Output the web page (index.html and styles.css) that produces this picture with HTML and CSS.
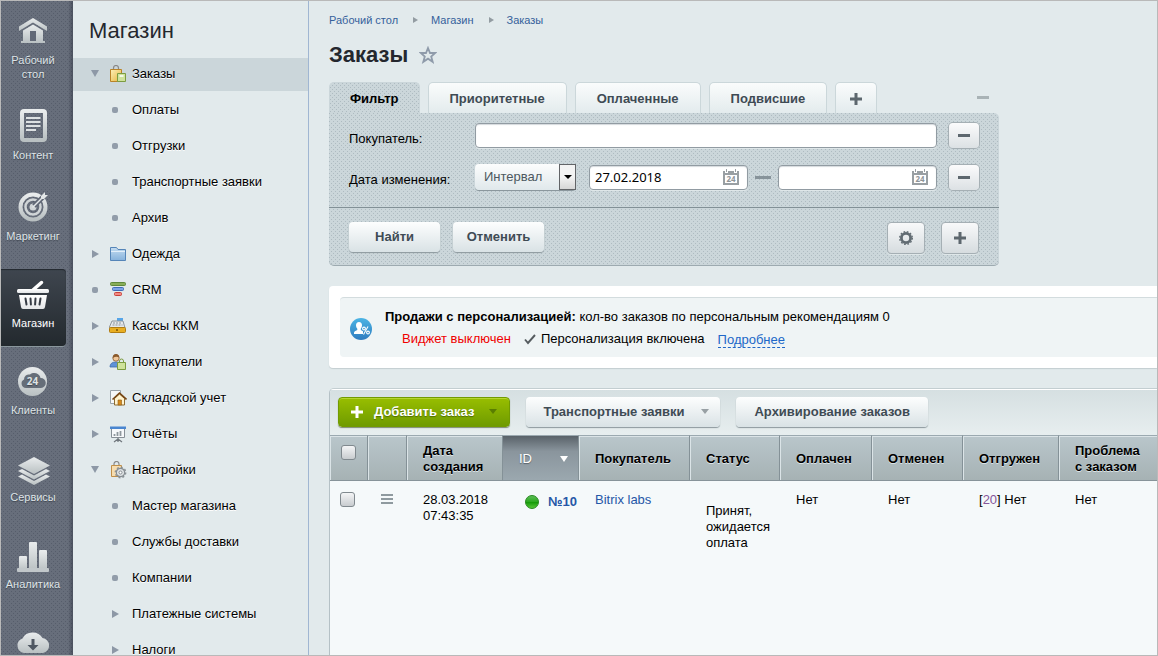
FILE: index.html
```html
<!DOCTYPE html>
<html lang="ru">
<head>
<meta charset="utf-8">
<title>Заказы</title>
<meta name="viewport" content="width=device-width, initial-scale=1">
<link rel="stylesheet" href="styles.css">
</head>
<body>
<svg class="defs" width="0" height="0" aria-hidden="true">
  <defs>
    <linearGradient id="silver" x1="0" y1="0" x2="0" y2="1"><stop offset="0" stop-color="#e9eced"/><stop offset="1" stop-color="#b9c0c2"/></linearGradient>
    <linearGradient id="white" x1="0" y1="0" x2="0" y2="1"><stop offset="0" stop-color="#ffffff"/><stop offset="1" stop-color="#e4e6e8"/></linearGradient>
    <linearGradient id="gold" x1="0" y1="0" x2="1" y2="1"><stop offset="0" stop-color="#fdf0b8"/><stop offset="1" stop-color="#e6b43c"/></linearGradient>
    <linearGradient id="sky" x1="0" y1="0" x2="0" y2="1"><stop offset="0" stop-color="#c4dcf0"/><stop offset="1" stop-color="#86b2dc"/></linearGradient>
    <linearGradient id="badge" x1="0" y1="0" x2="0" y2="1"><stop offset="0" stop-color="#4bb4e4"/><stop offset="1" stop-color="#2f7cc0"/></linearGradient>
    <linearGradient id="lamp" x1="0" y1="0" x2="0" y2="1"><stop offset="0" stop-color="#5fc05a"/><stop offset=".5" stop-color="#2aa81c"/><stop offset=".52" stop-color="#159a08"/><stop offset="1" stop-color="#5ccb3c"/></linearGradient>
  </defs>
</svg>
<div class="app">
  <nav class="rail" aria-label="Разделы">
    <a class="rail-item compact" href="#">
      <svg width="40" height="40" viewBox="0 0 40 40"><path fill="url(#silver)" d="M20 5 L34 13.500 V18 L20 9.500 L6 18 V13.500Z"/><path fill="url(#silver)" d="M20 11.500 L30 17.500 V28 H32 V30 H8 V28 H10 V17.500Z"/><path fill="#626977" d="M17 18h6v10h-6z"/></svg>
      <span>Рабочий стол</span></a>
    <a class="rail-item compact" href="#">
      <svg width="40" height="40" viewBox="0 0 40 40"><rect x="9" y="3" width="23" height="29" rx="2" fill="none" stroke="url(#silver)" stroke-width="4"/><path stroke="#dde1e3" stroke-width="2" fill="none" d="M13 10H27.500M13 14H27.500M13 18H27.500M13 22H23"/></svg>
      <span>Контент</span></a>
    <a class="rail-item" href="#">
      <svg width="40" height="40" viewBox="0 0 40 40"><circle cx="20" cy="18" r="12.500" fill="none" stroke="url(#silver)" stroke-width="4"/><circle cx="20" cy="18" r="7.500" fill="none" stroke="#d0d5d7" stroke-width="2.500"/><circle cx="20" cy="18" r="3.500" fill="#d0d5d7"/><path d="M21 17 L34 4" stroke="#626977" stroke-width="5"/><path d="M19 18 L28 9 V7 L32 3 V6 H35 L31 10 H29 L20 19Z" fill="#e3e7e8"/></svg>
      <span>Маркетинг</span></a>
    <a class="rail-item current" href="#">
      <svg width="40" height="40" viewBox="0 0 40 40"><path d="M20 14 L28.500 6.500" stroke="#fff" stroke-width="3.500" stroke-linecap="round"/><rect x="4" y="13" width="32" height="4" rx="1.500" fill="url(#white)"/><path fill="url(#white)" d="M6 19H34L32 31Q31.700 33 30 33H10Q8.300 33 8 31Z"/><path stroke="#363c45" stroke-width="2" stroke-linecap="round" d="M12.500 22.500l1 6M17.500 22.500l.4 6M22.500 22.500l-.4 6M27.500 22.500l-1 6"/></svg>
      <span>Магазин</span></a>
    <a class="rail-item" href="#">
      <svg width="40" height="40" viewBox="0 0 40 40"><circle cx="19.500" cy="18.500" r="14.500" fill="url(#silver)"/><path fill="#666e79" d="M13 25a4.500 4.500 0 0 1-2-8.500 5 5 0 0 1 6-5 6.500 6.500 0 0 1 10.500 3.500 5 5 0 0 1 .5 10z"/><text x="19.500" y="22" text-anchor="middle" class="icon-24">24</text></svg>
      <span>Клиенты</span></a>
    <a class="rail-item" href="#">
      <svg width="40" height="40" viewBox="0 0 40 40"><g fill="url(#silver)"><path d="M21 7 L37 15.500 L21 24 L5 15.500Z"/><path d="M5 21 L9 19 L21 25.500 L33 19 L37 21 L21 29.500Z"/><path d="M5 26.500 L9 24.500 L21 31 L33 24.500 L37 26.500 L21 35Z"/></g></svg>
      <span>Сервисы</span></a>
    <a class="rail-item" href="#">
      <svg width="40" height="40" viewBox="0 0 40 40"><g fill="url(#silver)"><rect x="6" y="19" width="8" height="15" rx="1"/><rect x="16" y="5" width="8" height="29" rx="1"/><rect x="26" y="13" width="8" height="21" rx="1"/></g><rect x="4" y="31" width="32" height="4" rx="1" fill="#c1c7ca"/></svg>
      <span>Аналитика</span></a>
    <a class="rail-item" href="#" aria-label="Маркетплейс">
      <svg width="40" height="40" viewBox="0 0 40 40"><path fill="url(#silver)" d="M11 29a7.500 7.500 0 0 1-1.500-14.500A11 10 0 0 1 29.500 14 7.600 7.600 0 0 1 30 29z"/><path fill="#4f5762" d="M18.500 15h3v6h4L20 26.500 14.500 21h4z"/></svg></a>
  </nav>

  <aside class="menu">
    <h2>Магазин</h2>
    <ul>
      <li class="current"><i class="tri down"></i><svg class="ico" viewBox="0 0 18 18"><path d="M4.500 5V3a2 2 0 0 1 5 0v2" fill="none" stroke="#888" stroke-width="1.200"/><path d="M1.500 4.500h11v12h-11z" fill="url(#gold)" stroke="#b98328"/><path d="M8.500 8.500h8v8h-8z" fill="#cfe29b" stroke="#7c9c40"/><path d="M10.500 11h4" stroke="#fff" stroke-width="1.500"/></svg><a href="#">Заказы</a></li>
      <li class="sub"><i class="dot"></i><a href="#">Оплаты</a></li>
      <li class="sub"><i class="dot"></i><a href="#">Отгрузки</a></li>
      <li class="sub"><i class="dot"></i><a href="#">Транспортные заявки</a></li>
      <li class="sub"><i class="dot"></i><a href="#">Архив</a></li>
      <li><i class="tri"></i><svg class="ico" viewBox="0 0 18 18"><path d="M1.500 15.500v-13h6l1.500 2h7.500v11z" fill="url(#sky)" stroke="#5585b8"/><path d="M2 6.500h14" stroke="#e3effa"/></svg><a href="#">Одежда</a></li>
      <li><i class="dot"></i><svg class="ico" viewBox="0 0 18 18"><rect x="1.500" y="1.500" width="15" height="3" rx="1" fill="#88ad58" stroke="#5e883b"/><rect x="3.500" y="6.500" width="11" height="3" rx="1" fill="#7ba3e5" stroke="#3f6bb8"/><rect x="5.500" y="11.500" width="7" height="3" rx="1" fill="#f28b84" stroke="#c9403a"/></svg><a href="#">CRM</a></li>
      <li><i class="tri"></i><svg class="ico" viewBox="0 0 18 18"><path d="M8 1h6v3H8z" fill="#56a5e8"/><path d="M3 4h11l2 7H0z" fill="#e5e8ea" stroke="#8c949a"/><path d="M4 6h9M3.500 8h10" stroke="#8c949a" stroke-dasharray="2 1"/><rect x=".5" y="10.500" width="16" height="5" rx="1" fill="#e8ae22" stroke="#b07c12"/><path d="M7 13h2" stroke="#7a4f00" stroke-width="1.500"/></svg><a href="#">Кассы ККМ</a></li>
      <li><i class="tri"></i><svg class="ico" viewBox="0 0 18 18"><path d="M1 14q0-5 6-5t6 5z" fill="#5e92d8" stroke="#3e6cab" stroke-width=".8"/><circle cx="7" cy="5" r="3.200" fill="#f0c79a" stroke="#8a5a2c" stroke-width=".8"/><path d="M3.800 5q0-4 3.200-4t3.200 3.500q-3-1.500-6.400.5" fill="#8a5a2c"/><path d="M8.500 9.500h8v7h-8z" fill="#cfe29b" stroke="#7c9c40"/><path d="M10.500 10V8a2 2 0 0 1 4 0v2" fill="none" stroke="#7c9c40"/></svg><a href="#">Покупатели</a></li>
      <li><i class="tri"></i><svg class="ico" viewBox="0 0 18 18"><path d="M1.500 1.500h10v13h-10z" fill="#f6f8f9" stroke="#9aa2a8"/><path d="M5.500 9.500L10.500 5l5 4.500v6.500h-10z" fill="#fff3cf" stroke="#8d6a30"/><path d="M3.500 10.500L10.500 4l7 6.500" fill="none" stroke="#754412" stroke-width="1.600"/><path d="M9 11h3.500v5H9z" fill="#d68a1d" stroke="#8d5a10" stroke-width=".6"/></svg><a href="#">Складской учет</a></li>
      <li><i class="tri"></i><svg class="ico" viewBox="0 0 18 18"><path d="M2.500 3.500h13v9h-13z" fill="#f6f8fa" stroke="#878f96"/><path d="M1 1.500h16v2.500H1z" fill="#4a86d0"/><path d="M5.500 11V9M8.500 11V7M11.500 11V6" stroke="#8e979d" stroke-width="1.800"/><path d="M9 13v4M9 14l-4 3M9 14l4 3" stroke="#70777d" stroke-width="1.200"/></svg><a href="#">Отчёты</a></li>
      <li><i class="tri down"></i><svg class="ico" viewBox="0 0 18 18"><path d="M5 5V3a2 2 0 0 1 5 0v2" fill="none" stroke="#888" stroke-width="1.200"/><path d="M2.500 4.500h10v11h-10z" fill="#f6ddb0" stroke="#c18f48"/><circle cx="11.500" cy="11.500" r="4.200" fill="#dde1e3" stroke="#868d92" stroke-width="1.200"/><circle cx="11.500" cy="11.500" r="5.300" fill="none" stroke="#868d92" stroke-width="1.200" stroke-dasharray="2 2.100"/><circle cx="11.500" cy="11.500" r="1.500" fill="#fff" stroke="#868d92"/></svg><a href="#">Настройки</a></li>
      <li class="sub"><i class="dot"></i><a href="#">Мастер магазина</a></li>
      <li class="sub"><i class="dot"></i><a href="#">Службы доставки</a></li>
      <li class="sub"><i class="dot"></i><a href="#">Компании</a></li>
      <li class="sub"><i class="tri"></i><a href="#">Платежные системы</a></li>
      <li class="sub"><i class="tri"></i><a href="#">Налоги</a></li>
    </ul>
  </aside>

  <main class="main">
    <nav class="crumbs" aria-label="Путь"><a href="#">Рабочий стол</a><i></i><a href="#">Магазин</a><i></i><a href="#">Заказы</a></nav>
    <div class="heading"><h1>Заказы</h1><button class="plain" aria-label="В избранное"><svg width="18" height="18" viewBox="0 0 18 18"><path d="M9 2l2 5h5.200l-4 3.500 1.500 5.300L9 12.700l-4.700 3.100 1.500-5.300-4-3.500H7z" fill="none" stroke="#8f9baa" stroke-width="1.800"/></svg></button></div>

    <form class="filter">
      <div class="tabs">
        <button type="button" class="tab active">Фильтр</button>
        <button type="button" class="tab">Приоритетные</button>
        <button type="button" class="tab">Оплаченные</button>
        <button type="button" class="tab">Подвисшие</button>
        <button type="button" class="tab add" aria-label="Добавить"><svg width="14" height="14" viewBox="0 0 14 14"><path d="M7 1v12M1 7h12" stroke="#5d676e" stroke-width="3"/></svg></button>
        <button type="button" class="plain collapse" aria-label="Свернуть"><svg width="12" height="3"><path d="M0 0h12v3H0z" fill="#a9b3b6"/></svg></button>
      </div>
      <div class="panel">
        <div class="fields">
          <div class="row">
            <label for="buyer">Покупатель:</label>
            <div class="field"><input id="buyer" type="text"></div>
            <button type="button" class="btn small" aria-label="Убрать"><svg width="12" height="3"><path d="M0 0h12v3H0z" fill="#5d676e"/></svg></button>
          </div>
          <div class="row">
            <label for="period">Дата изменения:</label>
            <div class="period">
              <div class="select"><select id="period"><option>Интервал</option></select><span></span></div>
              <div class="field"><input type="text" value="27.02.2018" aria-label="С даты"><button type="button" class="plain" aria-label="Календарь"><svg width="16" height="16" viewBox="0 0 16 16"><path fill="#999fa3" fill-rule="evenodd" d="M0 2h2v2h3V2h6v2h3V2h2v14H0zM2 6v8h12V6z"/><path d="M3.500 0v3M12.500 0v3" stroke="#999fa3"/><text x="8" y="13" text-anchor="middle" class="cal">24</text></svg></button></div>
              <i class="dash"></i>
              <div class="field"><input type="text" aria-label="По дату"><button type="button" class="plain" aria-label="Календарь"><svg width="16" height="16" viewBox="0 0 16 16"><path fill="#999fa3" fill-rule="evenodd" d="M0 2h2v2h3V2h6v2h3V2h2v14H0zM2 6v8h12V6z"/><path d="M3.500 0v3M12.500 0v3" stroke="#999fa3"/><text x="8" y="13" text-anchor="middle" class="cal">24</text></svg></button></div>
            </div>
            <button type="button" class="btn small" aria-label="Убрать"><svg width="12" height="3"><path d="M0 0h12v3H0z" fill="#5d676e"/></svg></button>
          </div>
        </div>
        <div class="actions">
          <button type="button" class="btn wide">Найти</button>
          <button type="button" class="btn wide">Отменить</button>
          <button type="button" class="btn square first" aria-label="Настройки"><svg width="16" height="16" viewBox="0 0 16 16"><circle cx="8" cy="8" r="4.600" fill="none" stroke="#626c73" stroke-width="2.800"/><circle cx="8" cy="8" r="6.300" fill="none" stroke="#626c73" stroke-width="1.400" stroke-dasharray="1.700 1.600"/></svg></button>
          <button type="button" class="btn square" aria-label="Добавить условие"><svg width="14" height="14" viewBox="0 0 14 14"><path d="M7 1v12M1 7h12" stroke="#5d676e" stroke-width="3"/></svg></button>
        </div>
      </div>
    </form>

    <section class="notice">
      <div class="notice-body">
        <svg width="22" height="22" viewBox="0 0 22 22"><circle cx="11" cy="11" r="11" fill="url(#badge)"/><path fill="#fff" d="M9 4q3 0 3 3.500 0 2-1.200 3.300v1.200l2.200 1.200V16H4v-1.500q0-1.500 3.300-2.500v-1.200Q6 9.500 6 7.500 6 4 9 4"/><g fill="none" stroke="#fff" stroke-width="1.100"><circle cx="14" cy="10.500" r="1.400"/><circle cx="18" cy="14.500" r="1.400"/><path d="M18 8.500l-4.500 8"/></g></svg>
        <div>
          <p><b>Продажи с персонализацией:</b> кол-во заказов по персональным рекомендациям 0</p>
          <p class="status"><span class="off">Виджет выключен</span><span class="on"><svg width="12" height="12" viewBox="0 0 12 12"><path d="M1 6.500l3 3.500 7-8" fill="none" stroke="#555b5f" stroke-width="1.900"/></svg>Персонализация включена</span><a href="#">Подробнее</a></p>
        </div>
      </div>
    </section>

    <section class="list">
      <div class="toolbar">
        <button class="btn green"><svg width="12" height="12" viewBox="0 0 12 12"><path d="M6 0v12M0 6h12" stroke="#fff" stroke-width="3"/></svg>Добавить заказ<i class="caret"></i></button>
        <button class="btn drop">Транспортные заявки<i class="caret"></i></button>
        <button class="btn archive">Архивирование заказов</button>
      </div>
      <table>
        <colgroup><col class="c1"><col class="c2"><col class="c3"><col class="c4"><col class="c5"><col class="c6"><col class="c7"><col class="c8"><col class="c3"><col></colgroup>
        <thead><tr>
          <th class="tick"><input type="checkbox" aria-label="Выбрать все"></th><th></th><th>Дата создания</th>
          <th class="sorted"><span>ID<i></i></span></th><th>Покупатель</th><th>Статус</th><th>Оплачен</th><th>Отменен</th><th>Отгружен</th><th>Проблема с&nbsp;заказом</th>
        </tr></thead>
        <tbody><tr>
          <td class="tick"><input type="checkbox" aria-label="Выбрать заказ"></td>
          <td class="burger"><button class="plain" aria-label="Действия"><svg width="12" height="10"><path d="M0 1h12M0 5h12M0 9h12" stroke="#8f9a9f" stroke-width="2"/></svg></button></td>
          <td>28.03.2018 07:43:35</td>
          <td class="id"><span><svg width="14" height="14" viewBox="0 0 14 14"><circle cx="7" cy="7" r="6.500" fill="url(#lamp)" stroke="#2b8a24"/></svg><a href="#">№10</a></span></td>
          <td><a href="#">Bitrix labs</a></td>
          <td class="state">Принят, ожидается оплата</td><td>Нет</td><td>Нет</td><td>[<a class="seen" href="#">20</a>] Нет</td><td>Нет</td>
        </tr></tbody>
      </table>
    </section>
  </main>
</div>
</body>
</html>
```
FILE: styles.css
```css
* { box-sizing: border-box; }
body { margin: 0; font: 13px/16px "Liberation Sans", Arial, sans-serif; color: #000; }
h1, h2, p, ul { margin: 0; padding: 0; }
a { color: #2557a7; text-decoration: none; }
button, input, select { font: inherit; color: inherit; margin: 0; }
svg { flex: none; display: block; }
.defs { position: absolute; }
.plain { display: flex; padding: 0; border: 0; background: none; }

.app {
  display: grid;
  grid-template-columns: 72px 236px minmax(0, 1fr);
  height: 100vh;
  overflow: hidden;
  border: 1px solid #b9b9b9;
  background: #e2eaec;
}

/* section rail */
.rail {
  display: flex;
  flex-direction: column;
  gap: 10px;
  padding: 5px 7px 0 0;
  overflow: hidden;
  background:
    linear-gradient(90deg, transparent 67px, rgba(45, 51, 65, .5)),
    conic-gradient(from 270deg at 1px 1px, #565d6b 90deg, transparent 0) 0 0 / 4px 4px,
    conic-gradient(from 270deg at 1px 1px, #565d6b 90deg, transparent 0) 2px 2px / 4px 4px,
    #676e7b;
}
.rail-item {
  display: flex;
  flex: none;
  flex-direction: column;
  align-items: center;
  padding: 7px 1px 16px 0;
  font-size: 11px;
  line-height: 14px;
  text-align: center;
  color: #dfe4e7;
  text-shadow: 0 1px 1px #3e444f;
}
.rail-item.compact { padding-bottom: 10px; }
.rail-item.current {
  color: #fff;
  border-radius: 0 4px 4px 0;
  background: linear-gradient(#3f464f, #23292e);
  box-shadow: 0 1px 0 #8b979d, inset 0 1px 1px #23282f;
}
.rail-item span { max-width: 60px; }
.icon-24 { font: bold 10px "Open Sans", sans-serif; fill: #dfe3e4; }

/* section menu */
.menu { overflow: hidden; border-right: 1px solid #a0b6d2; }
.menu h2 { padding: 17px 16px 14px; font-size: 22px; line-height: 26px; font-weight: normal; color: #24272e; }
.menu ul { display: grid; gap: 3px; list-style: none; }
.menu li {
  display: grid;
  grid-template-columns: 18px 18px 1fr;
  column-gap: 5px;
  align-items: center;
  justify-items: center;
  height: 33px;
  padding: 0 8px 2px 13px;
}
.menu li.current { background: #cbd6da; }
.menu li.sub { grid-template-columns: 24px 1fr; padding-left: 30px; }
.menu a { justify-self: start; color: #000; text-shadow: 0 1px 0 #fff; }
.ico { width: 18px; height: 18px; }
.tri { border: 4px solid transparent; border-left: 7px solid #8d98a6; border-right: 0; }
.tri.down { border: 4px solid transparent; border-top: 7px solid #8d98a6; border-bottom: 0; }
.dot { width: 6px; height: 6px; border-radius: 2px; background: #929daa; }

/* page head */
.main { display: flex; flex-direction: column; padding: 11px 0 0 20px; overflow: hidden; }
.crumbs { display: flex; align-items: center; font-size: 11px; }
.crumbs a { color: #35619b; }
.crumbs i { margin: 0 13px 0 15px; border: 3px solid transparent; border-left: 5px solid #939ca2; border-right: 0; }
.heading { display: flex; align-items: center; gap: 11px; padding: 14px 0; }
.heading h1 { font-size: 22px; line-height: 26px; color: #24272e; }

/* filter */
.filter { max-width: 670px; }
.tabs { display: flex; gap: 8px; }
.tab {
  height: 31px;
  padding: 1px 20px 0;
  font-weight: bold;
  color: #3f4b54;
  border: 1px solid #cbd7da;
  border-bottom: 0;
  border-radius: 5px 5px 0 0;
  background: linear-gradient(#fafcfc, #e3ebed);
}
.tab:not(.add, .active) { padding: 1px 21px 0; }
.tab.add { padding: 1px 13px 0; }
.tab.active, .panel {
  color: #000;
  background:
    conic-gradient(from 270deg at 1px 1px, #aebbc1 90deg, transparent 0) 0 0 / 4px 4px,
    conic-gradient(from 270deg at 1px 1px, #aebbc1 90deg, transparent 0) 2px 2px / 4px 4px,
    #cbd6da;
}
.tab.active { border-color: #cbd6da; }
.collapse { align-items: center; margin-left: auto; margin-right: 10px; }
.panel { border-bottom: 1px solid #9daab0; border-radius: 0 5px 5px 5px; }
.fields { display: grid; gap: 16px; padding: 10px 20px 17px; border-bottom: 1px solid #829096; }
.row { display: grid; grid-template-columns: 114px minmax(0, 1fr) 30px; column-gap: 12px; align-items: center; }
.row label { padding-top: 6px; white-space: nowrap; }
.field {
  display: flex;
  align-items: center;
  min-width: 0;
  height: 25px;
  border: 1px solid #919ba2;
  border-radius: 4px;
  background: #fff;
  box-shadow: inset 0 1px 1px #d5dadd, 0 1px 0 #dfe7e9;
}
.field input { flex: 1; min-width: 0; padding: 0 5px; border: 0; outline: 0; background: none; font-family: "Noto Sans", sans-serif; }
.field .plain { margin-right: 8px; }
.cal { font: bold 8px "Noto Sans", sans-serif; fill: #8f9599; }
.period { display: flex; gap: 7px; align-items: center; }
.period .field { flex: 1; }
.period .select { position: relative; width: 101px; margin-right: 6px; }
.select select {
  appearance: none;
  display: block;
  width: 100%;
  height: 26px;
  padding: 0 22px 0 9px;
  color: #4c5860;
  border: 0;
  border-radius: 4px;
  background: linear-gradient(#fcfdfd, #e0e8eb);
  box-shadow: 0 1px 0 #8b979d;
}
.select span {
  position: absolute;
  inset: 0 0 0 auto;
  width: 17px;
  border: 1px solid #626467;
  background: linear-gradient(#f3f3f3 50%, #d6d6d6);
  pointer-events: none;
}
.select span::after { content: ""; position: absolute; left: 4px; top: 10px; border: 4px solid transparent; border-top-color: #000; border-bottom: 0; }
.dash { width: 16px; height: 3px; background: #87939a; }
.actions { display: flex; gap: 13px; padding: 14px 20px 11px; }

/* buttons */
.btn {
  display: flex;
  align-items: center;
  justify-content: center;
  height: 30px;
  padding: 0 15px 1px;
  font-weight: bold;
  color: #3f4b54;
  white-space: nowrap;
  border: 0;
  border-radius: 4px;
  background: linear-gradient(#fdfefe, #d9e2e5);
  box-shadow: 0 1px 1px #8c989d;
}
.btn.wide { width: 91px; }
.btn.small { width: 30px; height: 25px; padding: 0; box-shadow: 0 0 0 1px #a5afb4; background: linear-gradient(#fbfbfc, #dce1e4); }
.btn.square { width: 38px; height: 32px; padding: 0; border: 1px solid #a5afb4; box-shadow: 0 1px 0 #dfe7e9; background: linear-gradient(#f8f9fa, #d6dcdf); }
.btn.first { margin: 0 3px 0 auto; }
.btn .caret { margin-left: 17px; border: 4px solid transparent; border-top: 5px solid #98a0a4; border-bottom: 0; }
.btn.drop { padding-left: 17px; padding-right: 11px; }
.btn.archive { padding-left: 18px; padding-right: 18px; }
.btn.green { gap: 11px; padding: 0 12px 1px; color: #fff; text-shadow: 0 1px 1px #4f6d00; border: 1px solid #729b00; background: linear-gradient(#98be00, #6f9b00); box-shadow: 0 1px 1px #7e8b70, inset 0 1px 0 #b6d630; }
.btn.green .caret { margin-left: 4px; border-top-color: #5a7e00; }

/* notice */
.notice { margin-top: 20px; padding: 11px 0 11px 11px; border-radius: 4px 0 0 4px; background: #fff; box-shadow: 0 1px 1px #c4ced1; }
.notice-body { display: flex; align-items: center; gap: 13px; padding: 11px 10px 9px; border-top: 1px solid #d3dcde; border-radius: 4px 0 0 4px; background: #eff4f5; }
.status { display: flex; align-items: center; gap: 13px; padding: 6px 0 1px 17px; }
.off { color: #f00000; }
.on { display: flex; align-items: center; gap: 5px; }
.status a { margin-bottom: -1px; color: #2067c8; border-bottom: 1px dashed #2067c8; line-height: 15px; }

/* order list */
.list { flex: 1; margin-top: 20px; border-left: 1px solid #b5c1c6; border-top: 1px solid #c3ced1; border-radius: 5px 0 0 0; background: #f5f9fa; overflow: hidden; }
.toolbar { display: flex; gap: 16px; padding: 8px; background: linear-gradient(#d5dfe1, #e7eeef); box-shadow: inset 0 1px 0 #fff; }
table { width: 100%; table-layout: fixed; border-collapse: separate; border-spacing: 0; }
.c1 { width: 38px; }
.c2 { width: 39px; }
.c3 { width: 96px; }
.c4 { width: 76px; }
.c5 { width: 111px; }
.c6 { width: 90px; }
.c7 { width: 92px; }
.c8 { width: 91px; }
th {
  height: 46px;
  padding: 2px 0 0 16px;
  text-align: left;
  text-shadow: 0 1px 0 #dce4e7;
  border-top: 1px solid #9ba9b0;
  border-bottom: 1px solid #879399;
  border-right: 1px solid #849197;
  background: linear-gradient(#b9c6cb, #a6b2b4);
  box-shadow: inset 1px 1px 0 #dbe4e7;
}
th:last-child { border-right: 0; padding-right: 8px; }
th.sorted { color: #fff; font-weight: normal; text-shadow: 0 1px 1px #59636b; background: linear-gradient(#596269, #8a959d 35%, #9ba8af); box-shadow: none; }
.sorted span { display: flex; align-items: center; justify-content: space-between; padding-right: 10px; }
.sorted i { border: 4px solid transparent; border-top: 6px solid #fff; border-bottom: 0; }
td { padding: 11px 4px 0 16px; vertical-align: top; }
th.tick, td.tick { padding: 11px 0 0 10px; vertical-align: top; }
th.tick { padding: 9px 0 0 11px; }
.tick input { appearance: none; display: block; width: 15px; height: 15px; border: 1px solid #80898e; border-radius: 3px; background: linear-gradient(#f4f5f6, #c8cccf); }
td.burger { padding: 13px 0 0 13px; }
td.id { padding: 13px 0 0 22px; font-weight: bold; }
.id span { display: flex; align-items: center; gap: 9px; }
td.state { padding-top: 22px; }
.seen { color: #86569a; }
```
